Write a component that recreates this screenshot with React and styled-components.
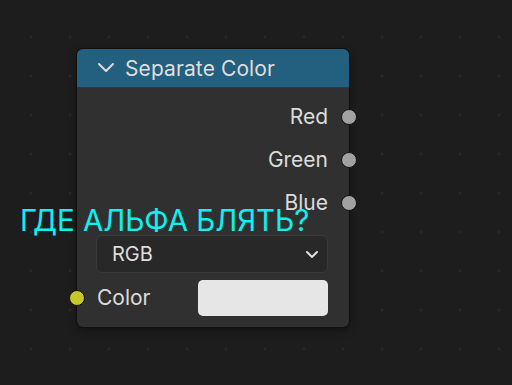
import React from "react";
import styled, { createGlobalStyle } from "styled-components";

const GlobalStyle = createGlobalStyle`
  html, body {
    margin: 0;
    padding: 0;
    background: #1d1d1d;
  }
  body {
    font-family: Inter, "Noto Sans", sans-serif;
  }
`;

const outputs = ["Red", "Green", "Blue"];

export default function App() {
  return (
    <>
      <GlobalStyle />
      <Canvas>
        <Node>
          <Header>
            <Chevron width="20" height="12" viewBox="0 0 20 12">
              <path d="M3 2 L10 9 L17 2" fill="none" stroke="#dcdcdc" strokeWidth="2" strokeLinecap="round" strokeLinejoin="round" />
            </Chevron>
            <Title>Separate Color</Title>
          </Header>
          <Body>
            {outputs.map((name) => (
              <OutputRow key={name}>
                <Label>{name}</Label>
                <Socket $side="right" $color="#a1a1a1" />
              </OutputRow>
            ))}
            <Dropdown>
              <span>RGB</span>
              <svg width="14" height="10" viewBox="0 0 14 10">
                <path d="M2 3 L7 8 L12 3" fill="none" stroke="#e0e0e0" strokeWidth="2" strokeLinecap="round" strokeLinejoin="round" />
              </svg>
            </Dropdown>
            <InputRow>
              <Socket $side="left" $color="#c7c72a" />
              <Label>Color</Label>
              <Swatch />
            </InputRow>
          </Body>
        </Node>
        <Caption>ГДЕ АЛЬФА БЛЯТЬ?</Caption>
      </Canvas>
    </>
  );
}

const Canvas = styled.div`
  position: relative;
  width: 512px;
  height: 385px;
  overflow: hidden;
  background-color: #1d1d1d;
  background-image: radial-gradient(circle, #2b2b2b 1px, transparent 1.2px);
  background-size: 39px 39px;
  background-position: 11.5px 17.5px;
`;

const Node = styled.div`
  position: absolute;
  left: 77px;
  top: 49px;
  width: 272px;
  border-radius: 6px;
  background: #303030;
  box-shadow: 0 0 0 1px #0f0f0f, 0 3px 8px rgba(0, 0, 0, 0.45);
`;

const Header = styled.div`
  display: flex;
  align-items: center;
  gap: 9px;
  height: 38px;
  padding-left: 19px;
  background: #235f7e;
  border-radius: 6px 6px 0 0;
  border-bottom: 1px solid #1c3f52;
`;

const Chevron = styled.svg`
  flex: none;
`;

const Title = styled.span`
  color: #dedede;
  font-size: 21px;
  letter-spacing: 0.1px;
`;

const Body = styled.div`
  display: flex;
  flex-direction: column;
  padding: 7px 21px 11px 19px;
`;

const OutputRow = styled.div`
  position: relative;
  display: flex;
  justify-content: flex-end;
  align-items: center;
  height: 43px;
`;

const Label = styled.span`
  color: #dcdcdc;
  font-size: 21px;
`;

const Socket = styled.span`
  position: absolute;
  top: 50%;
  width: 14px;
  height: 14px;
  margin-top: -8px;
  border-radius: 50%;
  background: ${(p) => p.$color};
  border: 1px solid #141414;
  ${(p) => (p.$side === "right" ? "right: -29px;" : "left: -27px;")}
`;

const Dropdown = styled.div`
  display: flex;
  justify-content: space-between;
  align-items: center;
  height: 36px;
  margin-top: 11px;
  padding: 0 8px 0 15px;
  background: #282828;
  border: 1px solid #3a3a3a;
  border-radius: 6px;
  color: #dddddd;
  font-size: 20px;
`;

const InputRow = styled.div`
  position: relative;
  display: flex;
  align-items: center;
  justify-content: space-between;
  height: 37px;
  margin-top: 6px;
  padding-left: 1px;
`;

const Swatch = styled.div`
  width: 130px;
  height: 36px;
  border-radius: 5px;
  background: #e6e6e6;
`;

const Caption = styled.div`
  position: absolute;
  left: 20px;
  top: 199px;
  color: #0ff0f0;
  font-family: Inter, "Noto Sans", sans-serif;
  font-size: 29.4px;
  line-height: 44px;
  white-space: nowrap;
`;
